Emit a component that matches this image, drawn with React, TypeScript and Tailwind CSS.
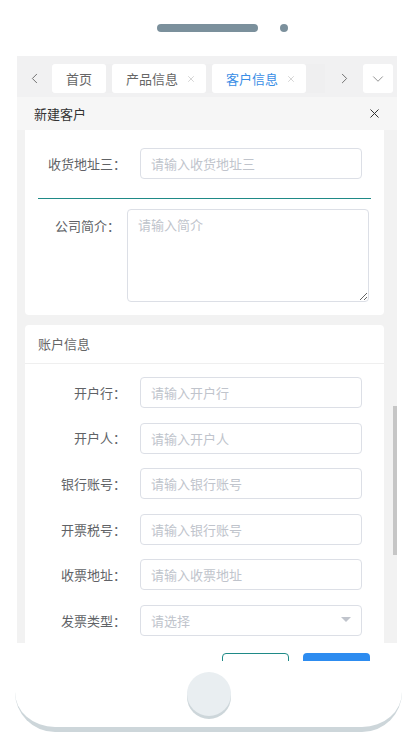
import React from 'react';
import { ChevronLeft, ChevronRight, ChevronDown, X } from 'lucide-react';

const accountFields = [
  { label: '开户行', placeholder: '请输入开户行' },
  { label: '开户人', placeholder: '请输入开户人' },
  { label: '银行账号', placeholder: '请输入银行账号' },
  { label: '开票税号', placeholder: '请输入银行账号' },
  { label: '收票地址', placeholder: '请输入收票地址' },
];

const Tab = ({ title, active, closable }: { title: string; active?: boolean; closable?: boolean }) => (
  <div
    className={`h-[29px] flex items-center bg-white rounded-[3px] text-[13px] ${closable ? 'pl-[14px] pr-[10px]' : 'px-[14px]'} ${active ? 'text-[#3a8ee6]' : 'text-[#666]'}`}
  >
    <span>{title}</span>
    {closable && <X size={10} strokeWidth={1.5} className="ml-[8px] text-[#bbb]" />}
  </div>
);

const FieldRow = ({ label, placeholder }: { label: string; placeholder: string }) => (
  <div className="flex items-center">
    <label className="w-[115px] pr-[14px] text-right text-[13px] text-[#606266]">{label}：</label>
    <input
      className="w-[222px] h-[31px] border border-[#dcdfe6] rounded-[4px] px-[10px] text-[13px] outline-none placeholder:text-[#c0c4cc]"
      placeholder={placeholder}
    />
  </div>
);

export default function App() {
  return (
    <div className="w-[410px] h-[735px] bg-white overflow-hidden font-['Noto_Sans_CJK_SC',sans-serif]">
      <div className="ml-[15px] w-[387px] h-[732px] bg-white rounded-b-[40px] border-b-[5px] border-[#cdd6da] flex flex-col">
        {/* speaker */}
        <div className="h-[56px] flex items-center pl-[142px]">
          <div className="w-[101px] h-[8px] rounded-full bg-[#7b909c]" />
          <div className="ml-[22px] w-[8px] h-[8px] rounded-full bg-[#7b909c]" />
        </div>

        {/* screen */}
        <div className="ml-[2px] w-[380px] h-[605px] overflow-hidden flex flex-col bg-[#f2f2f2]">
          <div className="h-[41px] flex-none flex items-start pt-[8px] bg-[#f1f1f2]">
            <div className="w-[35px] h-[29px] flex items-center justify-center text-[#666]">
              <ChevronLeft size={17} strokeWidth={1.3} />
            </div>
            <div className="w-[273px] flex gap-[6px] bg-[#efeff0]">
              <Tab title="首页" />
              <Tab title="产品信息" closable />
              <Tab title="客户信息" active closable />
            </div>
            <div className="w-[38px] h-[29px] flex items-center justify-center text-[#666]">
              <ChevronRight size={17} strokeWidth={1.3} />
            </div>
            <div className="w-[30px] h-[29px] bg-white rounded-[3px] flex items-center justify-center text-[#888]">
              <ChevronDown size={18} strokeWidth={1.2} />
            </div>
          </div>

          <div className="h-[33px] flex-none flex items-center justify-between pl-[17px] pr-[15px] bg-[#f6f6f6] text-[13px] text-[#333]">
            <span>新建客户</span>
            <X size={15} strokeWidth={1.6} className="text-[#333]" />
          </div>

          <div className="relative flex-1 overflow-hidden px-[8px] pr-[13px]">
            <div className="bg-white rounded-b-[4px] pt-[18px] pb-[13px]">
              <div className="flex items-center">
                <label className="w-[115px] pr-[14px] text-right text-[13px] text-[#606266]">收货地址三：</label>
                <input
                  className="w-[222px] h-[31px] border border-[#dcdfe6] rounded-[4px] px-[10px] text-[13px] outline-none placeholder:text-[#c0c4cc]"
                  placeholder="请输入收货地址三"
                />
              </div>
              <div className="mx-[13px] mt-[19px] h-px bg-[#1f8a87]" />
              <div className="flex items-start mt-[10px]">
                <label className="w-[102px] pr-[7px] pt-[7px] text-right text-[13px] text-[#606266]">公司简介：</label>
                <textarea
                  className="w-[242px] h-[93px] border border-[#dcdfe6] rounded-[4px] px-[10px] py-[5px] text-[13px] outline-none placeholder:text-[#c0c4cc]"
                  placeholder="请输入简介"
                />
              </div>
            </div>

            <div className="mt-[10px] bg-white rounded-[4px]">
              <div className="h-[39px] flex items-center pl-[13px] border-b border-[#efefef] text-[13px] text-[#666]">
                账户信息
              </div>
              <div className="pt-[13px] pb-[20px] flex flex-col gap-[14.6px]">
                {accountFields.map((f) => (
                  <FieldRow key={f.label} label={f.label} placeholder={f.placeholder} />
                ))}
                <div className="flex items-center">
                  <label className="w-[115px] pr-[14px] text-right text-[13px] text-[#606266]">发票类型：</label>
                  <div className="w-[222px] h-[31px] border border-[#dcdfe6] rounded-[4px] pl-[10px] pr-[10px] flex items-center justify-between text-[13px] text-[#c0c4cc]">
                    <span>请选择</span>
                    <svg width="10" height="6" viewBox="0 0 10 6">
                      <path d="M0 0 L10 0 L5 5 Z" fill="#c0c4cc" />
                    </svg>
                  </div>
                </div>
              </div>
            </div>

            <div className="absolute right-0 top-[276px] w-[4px] h-[149px] bg-[#c6c6c6]" />
          </div>

          <div className="h-[18px] flex-none bg-white flex justify-end items-start gap-[14px] pt-[10px] pr-[27px]">
            <div className="w-[67px] h-[32px] flex-none rounded-[4px] border border-[#1f8a87] bg-white" />
            <div className="w-[67px] h-[32px] flex-none rounded-[4px] bg-[#2d8cf0]" />
          </div>
        </div>

        {/* home button */}
        <div className="flex justify-center pt-[11px]">
          <div className="w-[44px] h-[44px] rounded-full bg-[#e9eef1] shadow-[0_3px_0_#cdd6da]" />
        </div>
      </div>
    </div>
  );
}
